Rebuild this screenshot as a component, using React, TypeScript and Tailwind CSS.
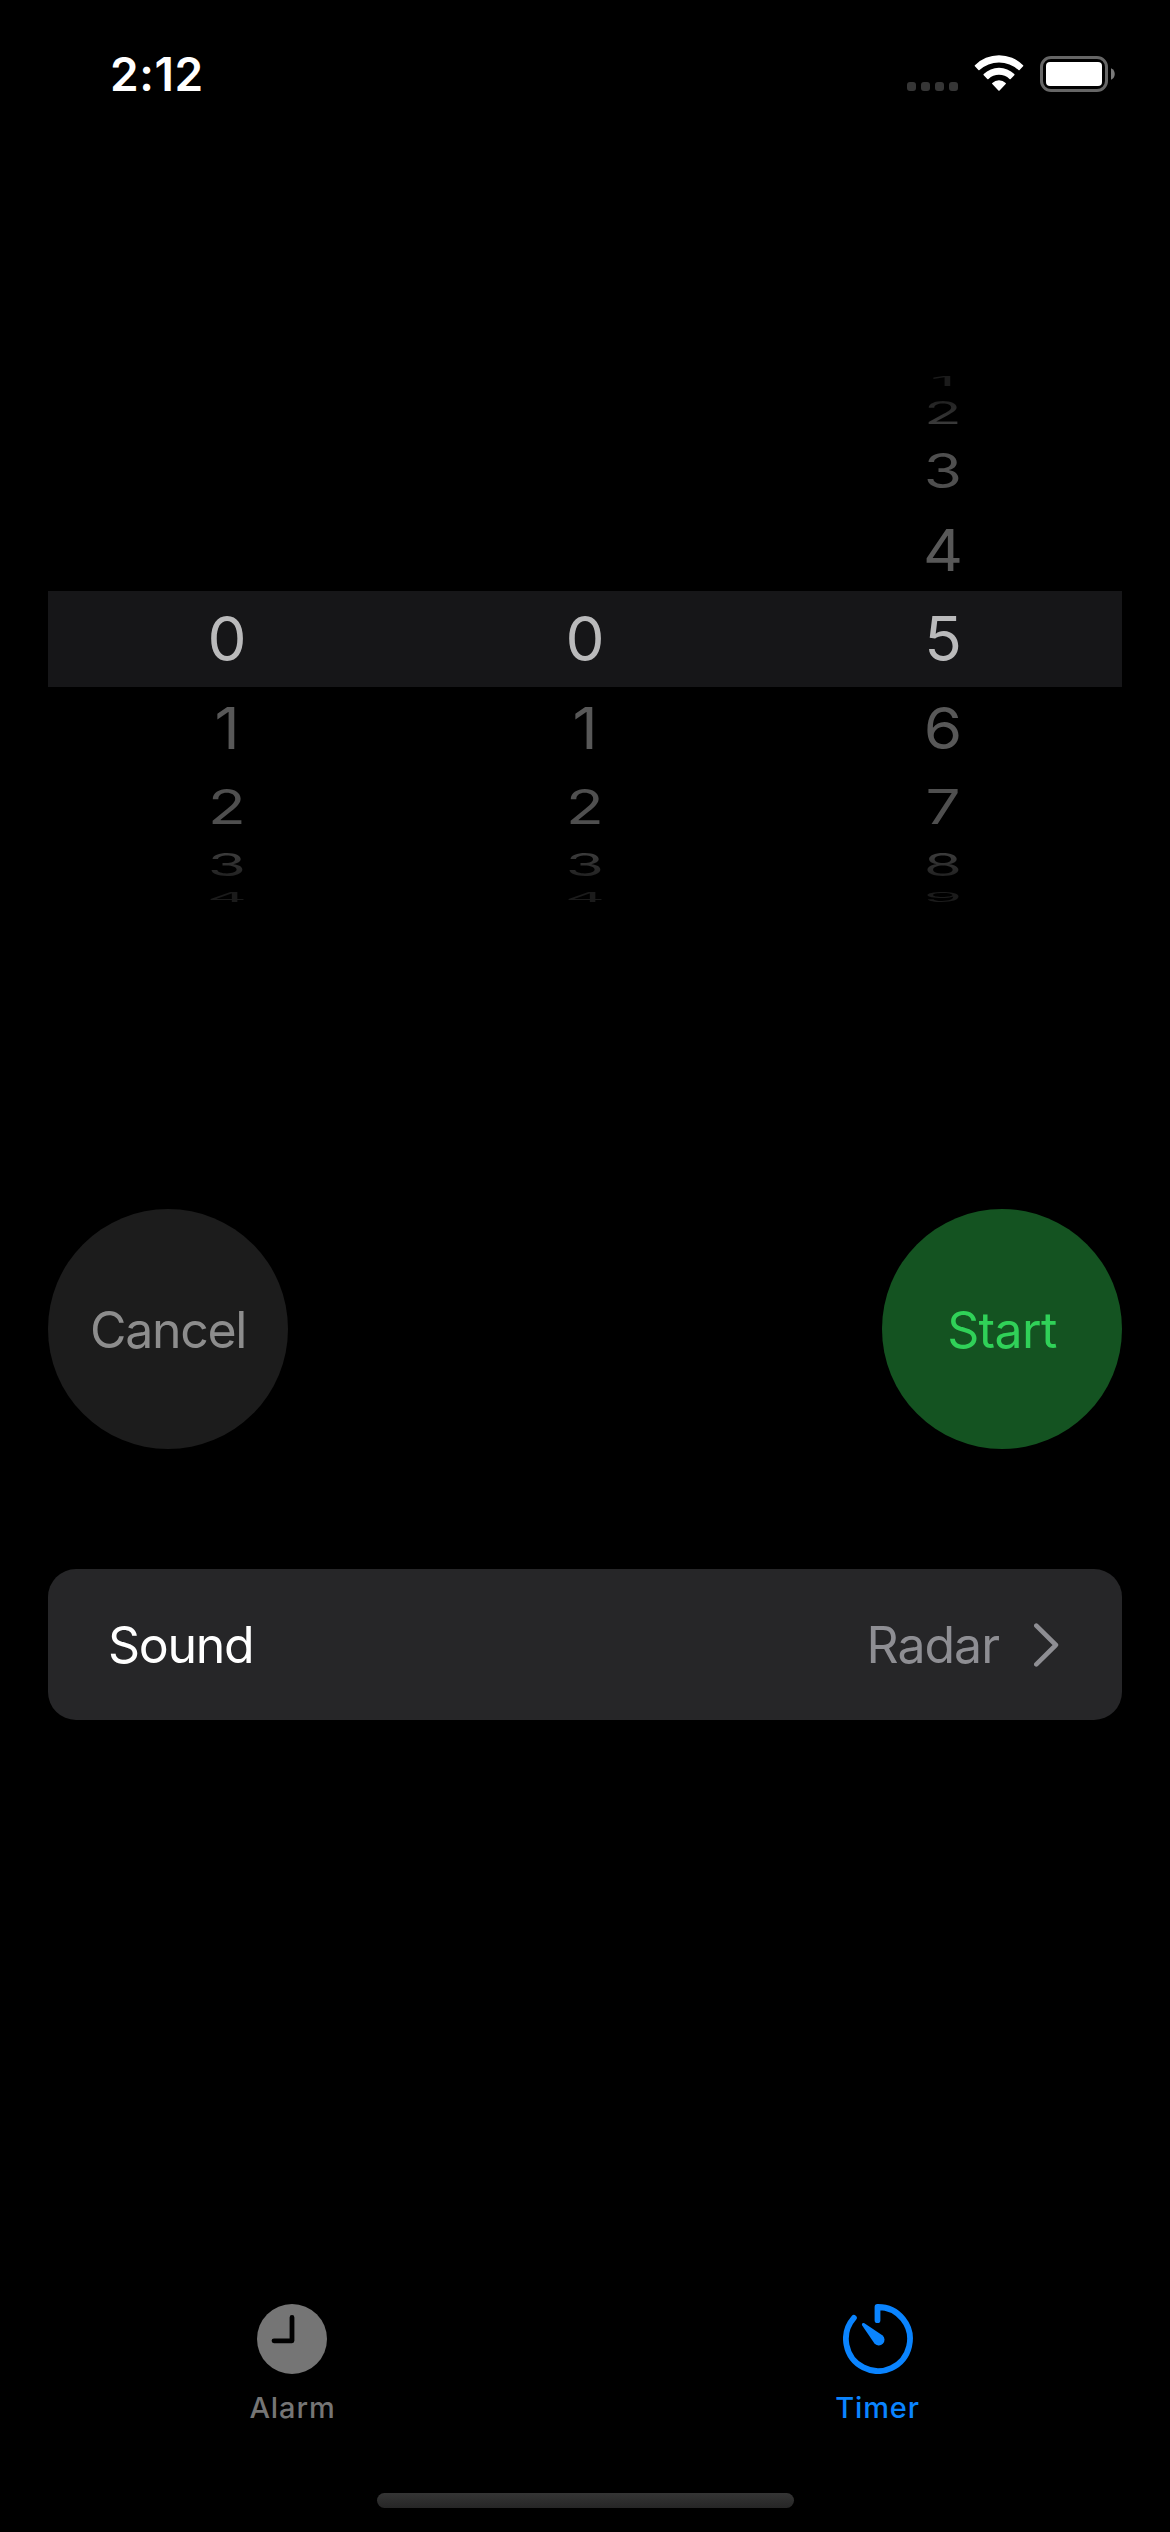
import React from "react";

type Row = { row: string; text: string };

// Row geometry and shading of the wheel, from the top edge to the bottom edge.
const wheelRows: Row[] = [
  { row: "h-[24px]", text: "scale-y-[0.21] text-[#1b1b1b]" },
  {
    row: "h-[40px]",
    text: "scale-y-[0.51] bg-linear-to-b from-[#222222] from-20% to-[#3b3b3b] to-80% bg-clip-text text-transparent",
  },
  { row: "h-[76px]", text: "scale-y-[0.765] text-[#4f4f4f]" },
  { row: "h-[82px]", text: "scale-y-[0.94] text-[#585858]" },
  { row: "h-[96px] bg-[#161618]", text: "text-[#bababb]" },
  { row: "h-[82px]", text: "scale-y-[0.94] text-[#585858]" },
  { row: "h-[76px]", text: "scale-y-[0.765] text-[#4f4f4f]" },
  {
    row: "h-[40px]",
    text: "scale-y-[0.51] bg-linear-to-b from-[#3b3b3b] from-20% to-[#222222] to-80% bg-clip-text text-transparent",
  },
  { row: "h-[24px]", text: "scale-y-[0.21] text-[#1b1b1b]" },
];

const wheels: { name: string; values: (number | null)[] }[] = [
  { name: "hours", values: [null, null, null, null, 0, 1, 2, 3, 4] },
  { name: "minutes", values: [null, null, null, null, 0, 1, 2, 3, 4] },
  { name: "seconds", values: [1, 2, 3, 4, 5, 6, 7, 8, 9] },
];

function StatusBar() {
  return (
    <header className="flex h-[148px] items-center justify-between pr-[55px] pl-[110px]">
      <span className="text-[46px] leading-[56px] font-semibold tracking-[0.6px] text-white">
        2:12
      </span>
      <div className="flex h-[38px] items-center">
        <div className="flex gap-[5px] self-end pb-[2px]">
          {[0, 1, 2, 3].map((i) => (
            <span key={i} className="size-[9px] rounded-[3px] bg-[#363636]" />
          ))}
        </div>
        <svg className="ml-4 h-[38px] w-[50px]" viewBox="0 1.1 50 38" fill="#fff">
          <path d="M0.9 11.3A34 34 0 0 1 49.1 11.3Q49.6 11.8 49.1 12.3L45.6 16.1Q45.1 16.7 44.5 16.2A29 29 0 0 0 5.5 16.2Q4.9 16.7 4.4 16.1L0.9 12.3Q0.4 11.8 0.9 11.3Z" />
          <path d="M9.7 20.1A22 22 0 0 1 40.3 20.1Q40.9 20.7 40.3 21.3L36.7 25Q36.1 25.6 35.5 25A15.6 15.6 0 0 0 14.5 25Q13.9 25.6 13.3 25L9.7 21.3Q9.1 20.7 9.7 20.1Z" />
          <path d="M18.3 29A10 10 0 0 1 31.7 29Q32.3 29.6 31.7 30.2L25.6 36.5Q25 37.1 24.4 36.5L18.3 30.2Q17.7 29.6 18.3 29Z" />
        </svg>
        <svg className="ml-4 h-[38px] w-[75px]" viewBox="0 0 75 38">
          <rect x="1.5" y="2.5" width="65" height="33" rx="9.5" fill="none" stroke="#666" strokeWidth="3" />
          <rect x="6" y="7" width="56" height="24" rx="4" fill="#fff" />
          <path d="M71 13.3C76 15 76 23 71 24.7Z" fill="#7a7a7a" />
        </svg>
      </div>
    </header>
  );
}

function Picker() {
  return (
    <section className="mx-12 mt-[221px] grid h-[540px] grid-cols-3">
      {wheels.map((wheel) => (
        <div key={wheel.name} className="flex flex-col">
          {wheel.values.map((value, i) => (
            <div key={i} className={`flex items-center justify-center ${wheelRows[i].row}`}>
              {value !== null && (
                <span className={`block shrink-0 text-[62px] leading-[76px] ${wheelRows[i].text}`}>
                  {value}
                </span>
              )}
            </div>
          ))}
        </div>
      ))}
    </section>
  );
}

function Controls() {
  return (
    <section className="mx-12 mt-[300px] flex justify-between">
      <button className="flex size-60 items-center justify-center rounded-full bg-[#1c1c1c] pt-0.5 text-[50px] leading-[60px] tracking-[-1.3px] text-[#8d8d8d]">
        Cancel
      </button>
      <button className="flex size-60 items-center justify-center rounded-full bg-[#145321] pt-0.5 text-[50px] leading-[60px] tracking-[-0.6px] text-[#30d158]">
        Start
      </button>
    </section>
  );
}

function SoundRow() {
  return (
    <section className="mx-12 mt-[120px] flex h-[151px] items-center rounded-[28px] bg-[#262628] pr-[63px] pl-[60px] text-[50px] leading-[61px]">
      <span className="pt-0.5 tracking-[-1.3px] text-white">Sound</span>
      <span className="ml-auto pt-0.5 tracking-[-1px] text-[#8e8e93]">Radar</span>
      <svg className="ml-[35px] h-[44px] w-[25px]" viewBox="0 0 25 44" fill="none">
        <path
          d="M2.3 2.6L21.9 22L2.3 41.4"
          stroke="#8e8e93"
          strokeWidth="4.6"
          strokeLinecap="round"
          strokeLinejoin="round"
        />
      </svg>
    </section>
  );
}

function TabBar() {
  return (
    <nav className="mt-[584px] grid grid-cols-2 text-[29px] leading-[35px] font-medium">
      <a className="flex flex-col items-center gap-4 text-[#757575]">
        <svg className="mr-px size-[70px]" viewBox="0 0 70 70" fill="none">
          <circle cx="35" cy="35" r="35" fill="currentColor" />
          <path
            d="M35 13.4V36.8H17"
            stroke="#000"
            strokeWidth="4.8"
            strokeLinecap="round"
            strokeLinejoin="round"
          />
        </svg>
        <span className="tracking-[0.9px]">Alarm</span>
      </a>
      <a className="flex flex-col items-center gap-4 text-[#0a84ff]">
        <svg className="size-[70px]" viewBox="0 0 70 70" fill="none">
          <path
            d="M34.5 16.2V3A32 32 0 1 1 10.9 13.9"
            stroke="currentColor"
            strokeWidth="5.8"
            strokeLinecap="round"
            strokeLinejoin="round"
          />
          <path
            d="M21.4 19.2L39.3 31.3A5.7 5.7 0 1 1 31.3 39.3L19.2 21.4C18.2 19.7 19.7 18.2 21.4 19.2Z"
            fill="currentColor"
          />
        </svg>
        <span className="tracking-[0.9px]">Timer</span>
      </a>
    </nav>
  );
}

export default function App() {
  return (
    <main className="flex h-[2532px] w-[1170px] flex-col overflow-hidden bg-black font-['Inter',sans-serif]">
      <StatusBar />
      <Picker />
      <Controls />
      <SoundRow />
      <TabBar />
      <div className="mt-[68px] h-[15px] w-[417px] self-center rounded-full bg-linear-to-b from-[#353535] to-[#262626]" />
    </main>
  );
}
